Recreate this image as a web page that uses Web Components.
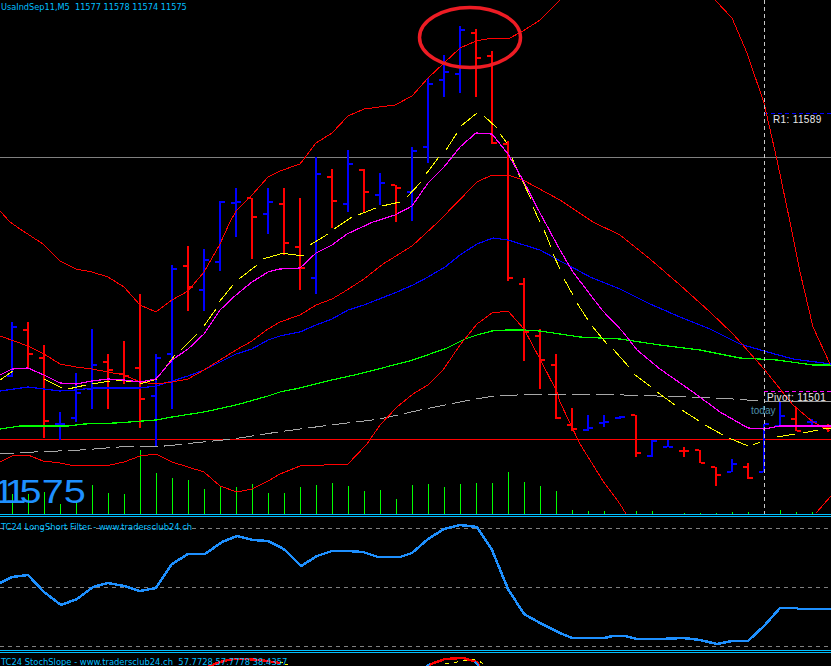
<!DOCTYPE html>
<html>
<head>
<meta charset="utf-8">
<title>UsaIndSep11,M5</title>
<style>
  html, body { margin: 0; background: #000; }
</style>
</head>
<body>
<mt-window>
  <mt-price-chart symbol="UsaIndSep11,M5  11577 11578 11574 11575"></mt-price-chart>
  <mt-separator></mt-separator>
  <mt-oscillator>TC24 LongShort Filter - www.tradersclub24.ch</mt-oscillator>
  <mt-separator></mt-separator>
  <mt-stoch>TC24 StochSlope - www.tradersclub24.ch  57.7728 57.7778 38.4357</mt-stoch>
</mt-window>

<script>
const pts = (a) => a.map((p) => p.join(',')).join(' ');
const line = (a, color, width = 1, dash = '') =>
  `<polyline points="${pts(a)}" fill="none" stroke="${color}" stroke-width="${width}"${dash ? ` stroke-dasharray="${dash}"` : ''}/>`;

// y of a polyline at x, for dashes that restart on the bar grid
const yAt = (a, x) => {
  for (let i = 1; i < a.length; i++) {
    if (x <= a[i][0]) {
      const [x0, y0] = a[i - 1];
      const [x1, y1] = a[i];
      return y0 + (y1 - y0) * (x - x0) / (x1 - x0);
    }
  }
  return a[a.length - 1][1];
};

// high, low, open (left tick), close (right tick), colour. One row per 16px
const BARS = [
  [322,377,376,327,'b'],[322,368,330,354,'r'],[345,438,358,421,'r'],[412,440,424,424,'b'],
  [373,422,418,393,'b'],[329,409,389,365,'b'],[354,409,362,370,'r'],[341,384,374,376,'r'],
  [294,428,368,399,'r'],[354,447,396,358,'b'],[265,409,354,269,'b'],[246,311,266,287,'r'],
  [249,311,290,260,'b'],[201,271,262,202,'b'],[188,237,203,202,'b'],[198,259,198,217,'r'],
  [188,234,214,202,'b'],[188,255,204,243,'r'],[198,290,247,268,'r'],[157,294,278,174,'b'],
  [169,228,177,201,'r'],[150,212,204,164,'b'],[169,212,170,192,'r'],[173,205,195,183,'b'],
  [185,222,185,188,'r'],[147,221,192,151,'b'],[78,163,147,84,'b'],[55,97,80,72,'b'],
  [26,93,74,30,'b'],[29,97,33,58,'r'],[51,144,56,143,'r'],[141,281,144,278,'r'],
  [278,361,284,332,'r'],[329,389,336,360,'r'],[354,419,365,418,'r'],[408,431,425,429,'r'],
  [415,431,430,428,'b'],[415,427,423,422,'b'],[416,419,418,417,'b'],[415,457,415,453,'r'],
  [440,457,456,441,'b'],[440,447,447,447,'b'],[447,457,451,451,'r'],[450,463,450,463,'r'],
  [467,486,467,475,'r'],[459,472,472,464,'b'],[463,479,467,478,'r'],[424,472,472,424,'b'],
  [402,426,426,416,'b'],[408,431,419,431,'r'],[419,427,422,422,'b'],[424,432,428,428,'r'],
];

const VOLUME_TOPS = [
  494,494,492,504,501,485,493,494,450,473,478,480,489,487,487,484,493,
  493,487,485,483,486,491,490,499,485,484,487,484,483,483,472,482,486,491,
  510,511,511,514,511,511,514,513,513,513,512,512,514,510,512,512,514,
];

const BB_UPPER_A = [[0,211],[10,222],[20,229],[43,244],[60,261],[76,269],[92,272],[108,277],[124,287],[140,305],[156,312],[172,300],[188,291],[204,272],[220,244],[230,222],[236,211],[252,195],[268,177],[280,171],[300,164],[316,143],[332,133],[348,116],[364,109],[395,105],[412,96],[428,78],[444,63],[460,48],[476,41],[492,38],[508,39],[523,31],[540,20],[560,0]];
const BB_UPPER_B = [[715,0],[732,18],[747,53],[764,103],[777,160],[790,222],[800,272],[813,327],[830,364]];
const BB_MID = [[0,336],[28,346],[44,354],[60,364],[76,367],[92,369],[124,375],[140,382],[156,384],[172,382],[188,379],[204,370],[220,360],[236,350],[252,341],[268,329],[280,322],[300,315],[316,305],[332,299],[347,290],[364,279],[383,264],[412,246],[438,222],[477,182],[492,175],[508,175],[523,180],[560,200],[593,222],[620,235],[650,259],[680,285],[710,312],[733,334],[764,369],[793,405],[813,422],[830,431]];
const BB_LOWER_A = [[0,462],[12,456],[28,455],[43,461],[60,463],[70,465],[110,465],[124,462],[140,456],[156,454],[172,462],[188,467],[204,472],[220,486],[237,492],[252,489],[268,481],[280,474],[300,466],[348,464],[367,444],[380,425],[397,407],[413,394],[428,385],[443,370],[460,345],[477,324],[492,313],[508,311],[524,329],[540,359],[557,392],[560,402],[580,444],[603,481],[620,504],[626,514]];
const BB_LOWER_B = [[816,513],[831,496]];
const MA_BLUE = [[0,391],[28,387],[44,389],[60,391],[76,390],[92,388],[140,388],[156,386],[172,381],[188,376],[204,370],[220,362],[236,354],[252,349],[268,340],[280,336],[300,332],[316,325],[332,319],[348,310],[364,305],[397,292],[413,285],[428,277],[445,267],[460,255],[477,244],[493,238],[508,240],[524,245],[540,250],[553,257],[560,261],[570,266],[590,277],[620,289],[650,304],[680,317],[710,329],[740,344],[764,351],[793,359],[831,364]];
const MA_GREEN = [[0,429],[20,426],[68,426],[84,424],[116,423],[156,420],[172,417],[204,412],[236,405],[268,396],[280,392],[300,388],[332,380],[363,373],[413,360],[447,348],[465,339],[477,335],[492,331],[507,330],[524,330],[540,331],[560,334],[580,337],[620,339],[660,345],[700,350],[740,358],[777,360],[813,365],[831,365]];
const MA_GRAY = [[0,454],[33,452],[83,450],[117,447],[167,446],[193,443],[233,439],[278,432],[323,426],[380,419],[420,410],[470,400],[493,396],[517,395],[560,394],[627,395],[687,397],[733,399],[760,401]];
const FAST_MAGENTA = [[0,375],[12,369],[28,368],[44,375],[60,383],[76,384],[92,381],[108,379],[124,380],[140,382],[156,379],[172,360],[188,349],[204,334],[220,310],[236,295],[252,282],[268,272],[280,269],[300,268],[316,253],[332,245],[347,234],[373,222],[395,215],[412,206],[428,183],[444,167],[460,147],[476,133],[492,134],[508,154],[524,182],[540,213],[560,250],[573,272],[602,310],[623,332],[637,350],[660,369],[693,392],[720,412],[748,428],[764,429],[780,426]];

// the yellow average is drawn dashed, each dash restarts on its own
const FAST_YELLOW = [
  [[0,380],[13,371]],[[16,369],[28,368],[37,372]],[[44,379],[62,388]],[[68,389],[86,385]],
  [[92,384],[110,381]],[[116,380],[135,382]],[[140,384],[157,379]],[[162,372],[175,355]],
  [[181,350],[197,334]],[[204,326],[216,309]],[[219,302],[233,285]],[[239,279],[257,265]],
  [[263,259],[280,254]],[[280,253],[304,256]],[[310,245],[328,234]],[[334,229],[352,217]],
  [[358,215],[376,208]],[[382,206],[400,202]],[[407,197],[421,182]],[[426,174],[439,157]],
  [[446,150],[457,133]],[[461,126],[477,113]],[[484,116],[497,128]],[[500,134],[507,143]],
  [[512,158],[520,177]],[[522,180],[531,199]],[[533,207],[540,222]],[[544,230],[551,247]],
  [[553,254],[560,269]],[[564,279],[573,295]],[[577,303],[588,320]],[[592,326],[607,344]],
  [[613,349],[629,367]],[[634,374],[651,387]],[[657,392],[675,405]],[[682,410],[699,421]],
  [[705,425],[723,435]],[[729,438],[748,446]],[[753,445],[760,442]],[[777,437],[795,434]],
  [[803,433],[818,430]],[[823,429],[831,428]],
];

const LONGSHORT = [[0,583],[12,577],[28,575],[44,592],[61,605],[77,599],[93,587],[108,583],[124,586],[140,591],[156,588],[172,564],[188,554],[205,554],[222,542],[237,536],[253,540],[268,541],[280,547],[285,550],[301,566],[317,556],[332,551],[348,551],[363,552],[378,557],[400,557],[412,553],[428,539],[444,529],[460,525],[477,527],[492,550],[508,589],[524,614],[540,623],[560,633],[572,638],[604,638],[613,636],[625,636],[637,639],[660,639],[683,638],[700,640],[717,644],[732,641],[748,641],[764,626],[780,608],[797,608],[798,609],[831,609]];

const LABEL_FONT = 'font-family: "DejaVu Sans", sans-serif; font-stretch: condensed; font-size: 9.3px;';

class MtWindow extends HTMLElement {
  constructor() {
    super();
    this.attachShadow({ mode: 'open' }).innerHTML = `
      <style>
        :host {
          display: flex;
          flex-direction: column;
          width: 831px;
          height: 666px;
          background: #000;
          overflow: hidden;
        }
      </style>
      <slot></slot>`;
  }
}

class MtSeparator extends HTMLElement {
  constructor() {
    super();
    this.attachShadow({ mode: 'open' }).innerHTML = `
      <style>
        :host {
          display: block;
          flex: none;
          height: 1px;
          border-top: 1px solid #00bfff;
          border-bottom: 1px solid #00bfff;
        }
      </style>`;
  }
}

class MtPriceChart extends HTMLElement {
  constructor() {
    super();
    this.attachShadow({ mode: 'open' });
  }

  connectedCallback() {
    const colors = { b: '#0000ff', r: '#ff0000' };
    const bars = BARS.map(([hi, lo, open, close, c], i) => {
      const x = 12 + i * 16;
      return `<g fill="${colors[c]}">
        <rect x="${x - 1}" y="${hi}" width="2" height="${lo - hi}"/>
        <rect x="${x - 5}" y="${open - 1}" width="4" height="2"/>
        <rect x="${x + 1}" y="${close - 1}" width="4" height="2"/>
      </g>`;
    }).join('');
    const volumes = VOLUME_TOPS.map((top, i) =>
      top < 514 ? `<rect x="${12 + i * 16}" y="${top}" width="1" height="${514 - top}" fill="#00ff00"/>` : ''
    ).join('');

    let grayDashes = '';
    for (let x = -4; x < 760; x += 24) {
      const a = Math.max(x, 0);
      const b = Math.min(x + 18, 760);
      grayDashes += line([[a, yAt(MA_GRAY, a)], [b, yAt(MA_GRAY, b)]], '#a8a8a8');
    }

    this.shadowRoot.innerHTML = `
      <style>
        :host {
          display: block;
          position: relative;
          flex: none;
          height: 514px;
          overflow: hidden;
        }
        svg { display: block; shape-rendering: crispEdges; }
        .ring { shape-rendering: auto; }
        span {
          position: absolute;
          white-space: pre;
          font-family: "Liberation Sans", Arial, sans-serif;
        }
        .symbol { left: 1px; top: 1px; line-height: 13px; color: #00bfff; ${LABEL_FONT} font-size: 9.1px; }
        .last {
          left: -7.5px;
          top: 473px;
          font-size: 33px;
          line-height: 38px;
          color: #1e90ff;
          transform: scaleX(1.2);
          transform-origin: left top;
        }
        .last b { position: static; font-weight: normal; letter-spacing: -8.7px; }
        .last i { position: static; font-style: normal; letter-spacing: -5.85px; }
        .level { font-size: 10px; line-height: 12px; color: #e8e8e8; letter-spacing: 0.35px; }
        .r1 { left: 773px; top: 114px; }
        .pivot { left: 767px; top: 392px; }
        .today { left: 751px; top: 405px; font-size: 10px; line-height: 12px; color: #4f8fa8; }
      </style>
      <svg width="831" height="514" viewBox="0 0 831 514">
        <rect x="0" y="157" width="831" height="1" fill="#808080"/>
        <rect x="0" y="439" width="831" height="1" fill="#ff0000"/>
        <line x1="764" y1="113.5" x2="831" y2="113.5" stroke="#0000ff" stroke-dasharray="4 3"/>
        <line x1="764" y1="391.5" x2="831" y2="391.5" stroke="#ff00ff" stroke-dasharray="4 3"/>
        <rect x="764" y="401" width="67" height="1" fill="#a0a0a0"/>
        ${bars}
        ${volumes}
        ${grayDashes}
        ${line(MA_GREEN, '#00ff00', 1.2)}
        ${line(MA_BLUE, '#0000ff', 1.2)}
        ${line(BB_UPPER_A, '#ff0000')}
        ${line(BB_UPPER_B, '#ff0000')}
        ${line(BB_MID, '#ff0000')}
        ${line(BB_LOWER_A, '#ff0000')}
        ${line(BB_LOWER_B, '#ff0000')}
        ${FAST_YELLOW.map((s) => line(s, '#ffff00')).join('')}
        ${line(FAST_MAGENTA, '#ff00ff', 1.2)}
        <rect x="780" y="425" width="51" height="2" fill="#ff00ff"/>
        <line x1="764.5" y1="0" x2="764.5" y2="514" stroke="#c8c8c8" stroke-dasharray="4 3"/>
        <ellipse class="ring" cx="470" cy="37.5" rx="50.5" ry="30" fill="none" stroke="#ed1c24" stroke-width="3.5"/>
      </svg>
      <span class="symbol">${this.getAttribute('symbol')}</span>
      <span class="last"><b>1</b><i>1</i>575</span>
      <span class="level r1">R1: 11589</span>
      <span class="level pivot">Pivot: 11501</span>
      <span class="today">today</span>`;
  }
}

class MtOscillator extends HTMLElement {
  constructor() {
    super();
    const guide = (y) => `<line x1="0" y1="${y}.5" x2="831" y2="${y}.5" stroke="#808080" stroke-dasharray="4 4"/>`;
    this.attachShadow({ mode: 'open' }).innerHTML = `
      <style>
        :host {
          display: block;
          position: relative;
          flex: none;
          height: 133px;
          overflow: hidden;
          ${LABEL_FONT}
          color: #00bfff;
        }
        svg { display: block; shape-rendering: crispEdges; }
        .label { position: absolute; left: 1px; top: 3px; line-height: 13px; white-space: pre; }
      </style>
      <svg width="831" height="133" viewBox="0 517 831 133">
        ${guide(528)}${guide(587)}${guide(646)}
        ${line(LONGSHORT, '#1e90ff', 2.5)}
      </svg>
      <div class="label"><slot></slot></div>`;
  }
}

class MtStoch extends HTMLElement {
  constructor() {
    super();
    const right = [[427,667],[431,664],[445,659],[463,658],[477,662],[480,667]];
    const left = [[207,667],[220,662],[233,659],[245,659],[260,660],[280,663]];
    this.attachShadow({ mode: 'open' }).innerHTML = `
      <style>
        :host {
          display: block;
          position: relative;
          flex: 1;
          overflow: hidden;
          ${LABEL_FONT}
          color: #00bfff;
        }
        svg { display: block; shape-rendering: crispEdges; }
        .label { position: absolute; left: 1px; top: 2px; line-height: 13px; white-space: pre; }
      </style>
      <svg width="831" height="13" viewBox="0 653 831 13">
        ${line(right, '#ff0000', 2.4)}
        ${line(left, '#ff0000', 2.4)}
        <polyline points="425,667 430,664" fill="none" stroke="#1e90ff" stroke-width="2"/>
        <polyline points="475,662 479,666" fill="none" stroke="#1e90ff" stroke-width="2"/>
        <polyline points="445,664 475,659 486,665" fill="none" stroke="#ffff00" stroke-dasharray="4 5"/>
        <polyline points="280,662 288,665" fill="none" stroke="#ffff00" stroke-dasharray="3 3"/>
      </svg>
      <div class="label"><slot></slot></div>`;
  }
}

customElements.define('mt-window', MtWindow);
customElements.define('mt-separator', MtSeparator);
customElements.define('mt-price-chart', MtPriceChart);
customElements.define('mt-oscillator', MtOscillator);
customElements.define('mt-stoch', MtStoch);
</script>
</body>
</html>
